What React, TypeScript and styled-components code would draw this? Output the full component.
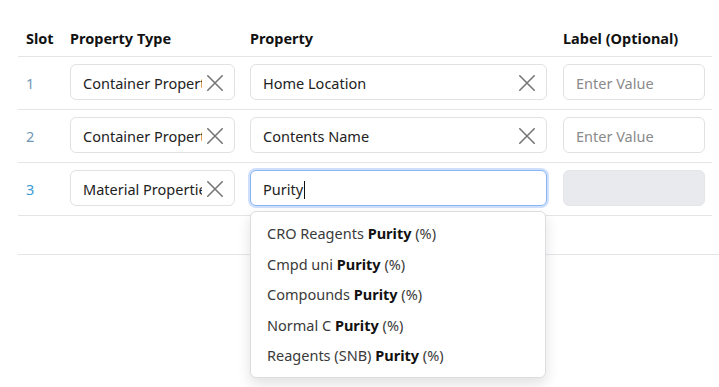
import React from 'react';
import styled, { createGlobalStyle, css } from 'styled-components';

const GlobalStyle = createGlobalStyle`
  html, body, #root {
    height: 100%;
  }
  body {
    margin: 0;
    background: #fff;
    font-family: 'Noto Sans', 'Open Sans', sans-serif;
    color: #222;
  }
`;

const Page = styled.div`
  box-sizing: border-box;
  min-height: 100%;
  padding: 20px 7px 0 18px;
`;

const Row = styled.div<{ $header?: boolean }>`
  display: grid;
  grid-template-columns: 44px 180px 313px 157px;
  align-items: center;
  border-bottom: 1px solid #e3e5e8;
  ${(p) =>
    p.$header
      ? css`
          height: 36px;
        `
      : css`
          padding: 7px 0 9px;
        `}
`;

const HeadCell = styled.div`
  padding: 0 8px;
  font-size: 14.5px;
  font-weight: 700;
  color: #111;
  white-space: nowrap;
`;

const Cell = styled.div<{ $right?: number }>`
  padding: 0 ${(p) => p.$right ?? 8}px 0 8px;
  position: relative;
`;

const SlotNum = styled.div<{ $active?: boolean }>`
  padding: 2px 0 0 8px;
  font-size: 14.5px;
  color: ${(p) => (p.$active ? '#3d9bd6' : '#6f97b3')};
`;

const Field = styled.div<{ $focused?: boolean; $disabled?: boolean }>`
  box-sizing: border-box;
  height: 36px;
  display: flex;
  align-items: center;
  padding: 1px 12px 0;
  border: 1px solid #dfe1e5;
  border-radius: 6px;
  background: #fff;
  font-size: 14.5px;
  color: #222;
  overflow: hidden;
  ${(p) =>
    p.$focused &&
    css`
      border-color: #8db4f5;
      box-shadow: 0 0 0 2px #cfe0fc;
    `}
  ${(p) =>
    p.$disabled &&
    css`
      background: #e9eaee;
      border-color: #e4e6ea;
    `}
`;

const Value = styled.span`
  flex: 1;
  min-width: 0;
  padding-top: 1px;
  white-space: nowrap;
  overflow: hidden;
  text-overflow: clip;
`;

const Placeholder = styled.span`
  padding-top: 1px;
  color: #8a8a8a;
  white-space: nowrap;
`;

const Caret = styled.span`
  display: inline-block;
  width: 1px;
  height: 18px;
  background: #111;
  vertical-align: -4px;
  margin-left: 1px;
`;

const ClearButton = styled.span`
  flex: none;
  display: flex;
  margin-left: 5px;
  margin-right: -1px;
  color: #777;
`;

const Footer = styled.div`
  height: 38px;
  margin-right: -7px;
  border-bottom: 1px solid #e3e5e8;
`;

const Menu = styled.div`
  position: absolute;
  left: 8px;
  right: 9px;
  top: calc(100% + 5px);
  box-sizing: border-box;
  padding: 6px 0;
  background: #fff;
  border: 1px solid #dcdde0;
  border-radius: 6px;
  box-shadow: 0 6px 14px rgba(0, 0, 0, 0.12);
  z-index: 2;
`;

const MenuItem = styled.div`
  height: 30.5px;
  display: flex;
  align-items: center;
  padding: 0 16px;
  font-size: 14.5px;
  color: #3a3a3a;
  white-space: nowrap;
  b {
    color: #111;
    font-weight: 700;
  }
`;

const ClearIcon = () => (
  <svg width="16" height="16" viewBox="0 0 16 16" fill="none">
    <path d="M0.8 0.8L15.2 15.2M15.2 0.8L0.8 15.2" stroke="currentColor" strokeWidth="1.6" strokeLinecap="round" />
  </svg>
);

type Slot = {
  num: number;
  type: string;
  property: string;
  active?: boolean;
};

const slots: Slot[] = [
  { num: 1, type: 'Container Properties', property: 'Home Location' },
  { num: 2, type: 'Container Properties', property: 'Contents Name' },
  { num: 3, type: 'Material Properties', property: 'Purity', active: true },
];

const options = ['CRO Reagents', 'Cmpd uni', 'Compounds', 'Normal C', 'Reagents (SNB)'];

export default function App() {
  return (
    <>
      <GlobalStyle />
      <Page>
        <Row $header>
          <HeadCell>Slot</HeadCell>
          <HeadCell>Property Type</HeadCell>
          <HeadCell>Property</HeadCell>
          <HeadCell>Label (Optional)</HeadCell>
        </Row>
        {slots.map((s) => (
          <Row key={s.num}>
            <SlotNum $active={s.active}>{s.num}</SlotNum>
            <Cell $right={7}>
              <Field>
                <Value>{s.type}</Value>
                <ClearButton>
                  <ClearIcon />
                </ClearButton>
              </Field>
            </Cell>
            <Cell>
              {s.active ? (
                <>
                  <Field $focused>
                    <Value>
                      {s.property}
                      <Caret />
                    </Value>
                  </Field>
                  <Menu>
                    {options.map((o) => (
                      <MenuItem key={o}>
                        {o}&nbsp;<b>Purity</b>&nbsp;(%)
                      </MenuItem>
                    ))}
                  </Menu>
                </>
              ) : (
                <Field>
                  <Value>{s.property}</Value>
                  <ClearButton>
                    <ClearIcon />
                  </ClearButton>
                </Field>
              )}
            </Cell>
            <Cell $right={7}>
              {s.active ? (
                <Field $disabled />
              ) : (
                <Field>
                  <Placeholder>Enter Value</Placeholder>
                </Field>
              )}
            </Cell>
          </Row>
        ))}
        <Footer />
      </Page>
    </>
  );
}
